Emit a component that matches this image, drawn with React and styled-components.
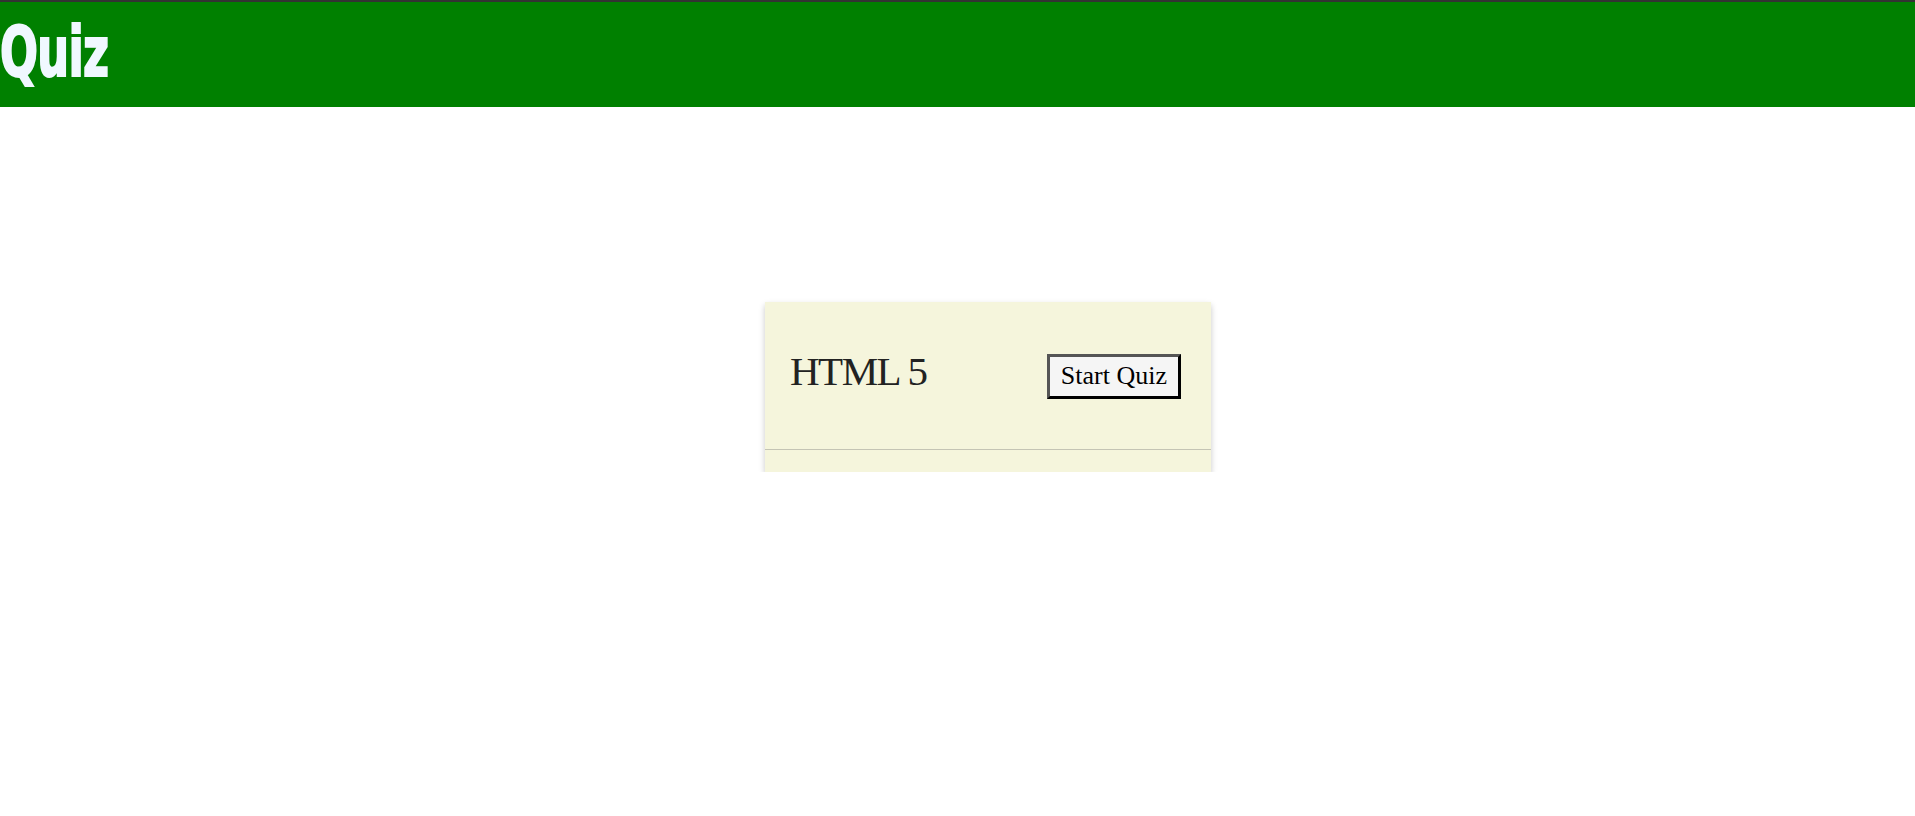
import React from 'react';
import styled, { createGlobalStyle } from 'styled-components';

const GlobalStyle = createGlobalStyle`
    body {
        margin: 0;
        background: #ffffff;
        font-family: "Liberation Serif", "Times New Roman", serif;
    }
`;

const Header = styled.header`
    height: 105px;
    background: #008000;
    border-top: 2px solid #333333;
    overflow: hidden;
`;

const Brand = styled.h1`
    margin: 0;
    display: inline-block;
    font-family: Impact, "Liberation Sans Narrow", "DejaVu Sans Condensed", sans-serif;
    font-weight: 700;
    font-size: 70px;
    line-height: 100px;
    letter-spacing: -1px;
    color: #f0f8ff;
    transform: scaleX(0.71);
    transform-origin: left center;
    -webkit-text-stroke: 2px #f0f8ff;
`;

const Main = styled.main`
    display: flex;
    justify-content: center;
    padding: 195px 0 0 61px;
`;

const Card = styled.section`
    width: 446px;
    background: #f5f5dc;
    box-shadow: 0 3px 6px rgba(0, 0, 0, 0.22);
    padding-bottom: 22px;
`;

const CardRow = styled.div`
    display: flex;
    justify-content: space-between;
    align-items: flex-start;
    padding: 0 30px 0 25px;
`;

const Topic = styled.h2`
    margin: 49px 0 0;
    font-family: "Liberation Serif", "Times New Roman", serif;
    font-weight: 400;
    font-size: 41px;
    line-height: 1;
    letter-spacing: -1.5px;
    color: #222222;
`;

const StartButton = styled.button`
    margin-top: 52px;
    padding: 4px 11px 5px;
    font-family: "Liberation Serif", "Times New Roman", serif;
    font-size: 26px;
    line-height: 30px;
    color: #000000;
    background: #f5f5f5;
    border-style: solid;
    border-width: 3px;
    border-color: #555555 #000000 #000000 #555555;
    cursor: pointer;
`;

const Divider = styled.hr`
    margin: 50px 0 0;
    border: 0;
    border-top: 1px solid #c4c4b4;
`;

const quizzes = [{ id: 'html5', title: 'HTML 5' }];

const App = () => {
    return (
        <>
            <GlobalStyle />
            <Header>
                <Brand>Quiz</Brand>
            </Header>
            <Main>
                {quizzes.map((quiz) => (
                    <Card key={quiz.id}>
                        <CardRow>
                            <Topic>{quiz.title}</Topic>
                            <StartButton>Start Quiz</StartButton>
                        </CardRow>
                        <Divider />
                    </Card>
                ))}
            </Main>
        </>
    );
};

export default App;
